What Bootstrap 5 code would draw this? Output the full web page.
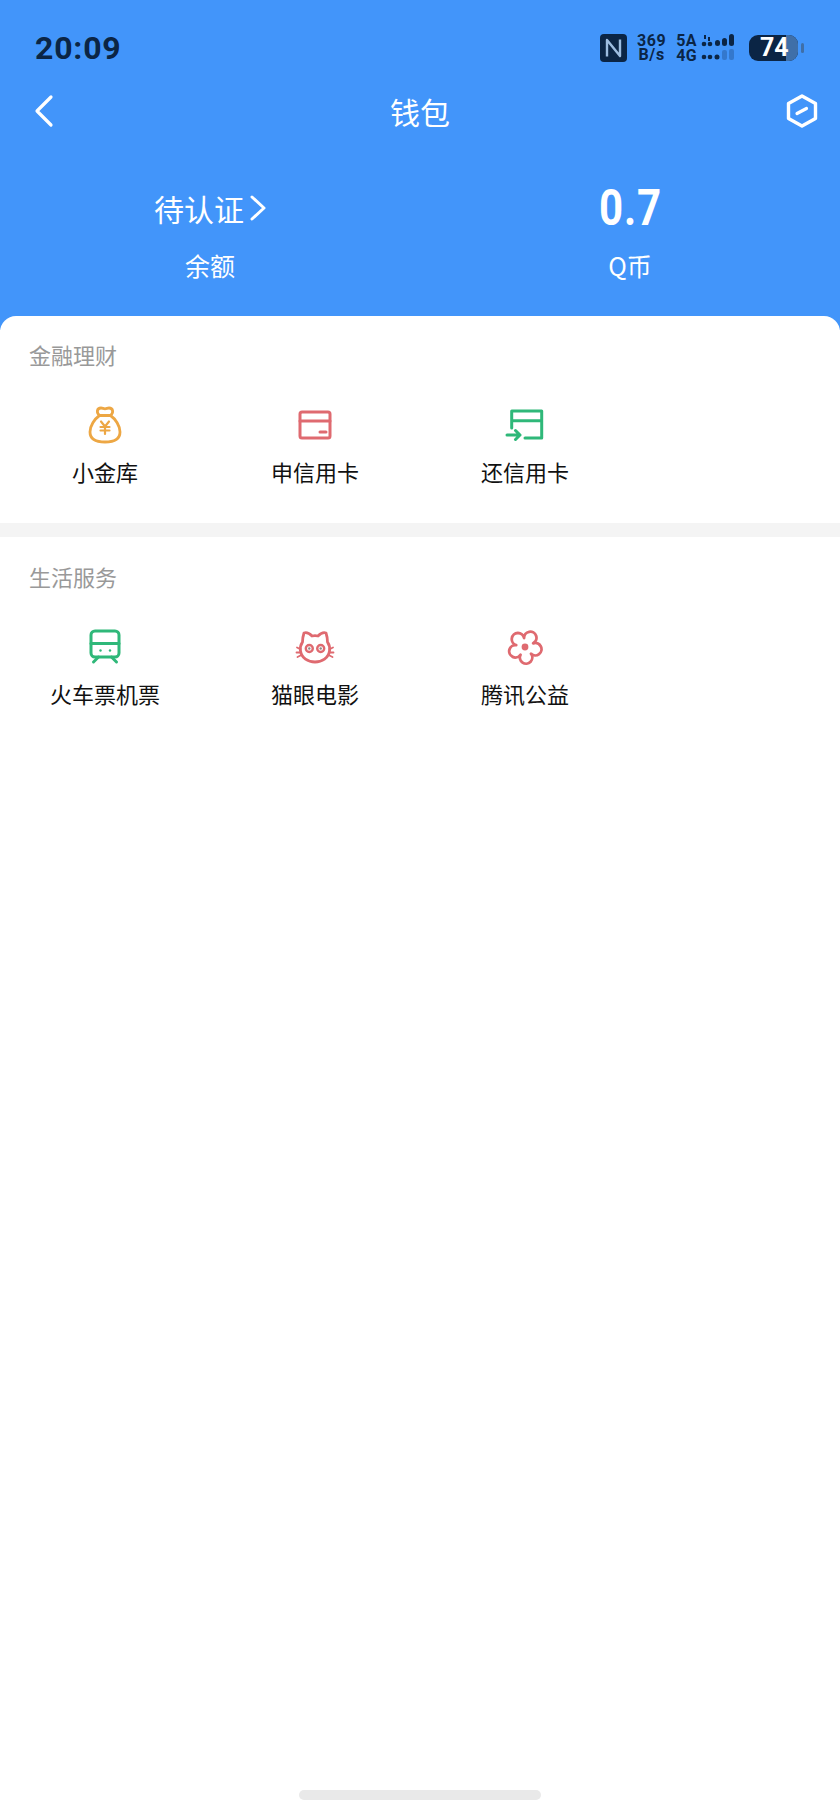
<!DOCTYPE html>
<html lang="zh-CN">
<head>
    <meta charset="UTF-8">
    <meta name="viewport" content="width=device-width, initial-scale=1.0">
    <title>钱包</title>
    <link href="https://cdn.jsdelivr.net/npm/bootstrap@5.3.0/dist/css/bootstrap.min.css" rel="stylesheet">
    <style>
        body {
            background: #fff;
            margin: 0;
            height: 1813px;
            overflow: hidden;
            font-family: "Noto Sans CJK SC", "Noto Sans", sans-serif;
        }
        .wallet-page { height: 1813px; }
        .wallet-head { background: #4295fa; height: 330px; padding-top: 30px; color: #fff; }
        .status-row { height: 36px; padding: 0 35px; color: #0b2545; }
        .status-time { font: 700 32px/36px Roboto, sans-serif; letter-spacing: .8px; }
        .status-icons { gap: 10px; margin-right: 1px; }
        .net-speed { font: 700 16px/14px Roboto, sans-serif; text-align: center; letter-spacing: .6px; }
        .sim-text { font: 700 16px/15px Roboto, sans-serif; letter-spacing: .3px; }
        .batt { width: 49px; height: 26px; border-radius: 9px; background: #0b2545; position: relative; color: #fff; font: 700 25px/26px Roboto, sans-serif; padding-left: 11px; }
        .batt-rest { position: absolute; right: 0; top: 0; bottom: 0; width: 12px; background: #3f6fa8; border-radius: 0 9px 9px 0; }
        .batt-num { position: relative; }
        .title-row { height: 60px; margin-top: 15px; padding: 0 22px; }
        .title-side { flex: 1; }
        .back-icon { margin-left: 11px; }
        .page-title { font-size: 30px; line-height: 60px; }
        .balance-row { margin-top: 35px; }
        .bal-cell { width: 420px; text-align: center; }
        .bal-top { height: 64px; font-size: 30px; line-height: 64px; gap: 6px; }
        .bal-num { font: 700 50px/64px Roboto, sans-serif; letter-spacing: 1px; display: inline-block; transform: scaleX(.84); }
        .bal-sub { font-size: 25px; line-height: 36px; margin-top: 7px; }
        .wallet-body { margin-top: -14px; background: #fff; border-radius: 16px 16px 0 0; position: relative; }
        .svc-block { padding: 22px 0 0; height: 207px; }
        .svc-block + .svc-block { border-top: 14px solid #f4f4f4; height: 221px; padding-top: 23px; }
        .svc-title { font-size: 22px; line-height: 32px; color: #999; padding-left: 29px; margin: 0; }
        .svc-grid { margin-top: 35px; }
        .svc-item { width: 210px; }
        .svc-icon { display: block; width: 40px; height: 40px; }
        .svc-label { font-size: 22px; line-height: 32px; color: #111; margin-top: 10px; }
        .home-bar { position: absolute; left: 299px; top: 1790px; width: 242px; height: 10px; border-radius: 5px; background: #e9e9e9; }
    </style>
</head>
<body>
    <div class="wallet-page position-relative">
        <div class="wallet-head">
            <div class="status-row d-flex justify-content-between align-items-center">
                <div class="status-time">20:09</div>
                <div class="status-icons d-flex align-items-center">
                    <svg width="27" height="28" viewBox="0 0 27 28">
                        <rect width="27" height="28" rx="4" fill="#0b2545"/>
                        <path d="M7 22.500V6l13 16V5.500" fill="none" stroke="#9dbde0" stroke-width="2.400" stroke-linejoin="round"/>
                    </svg>
                    <div class="net-speed">369<br>B/s</div>
                    <div class="d-flex align-items-center gap-1">
                        <div class="sim-text">5A<br>4G</div>
                        <svg width="38" height="28" viewBox="0 0 38 28" fill="#0b2545">
                            <path d="M3 1h2v4H3zM7 3h2v4H7z"/>
                            <circle cx="3" cy="10" r="2.300"/><circle cx="9" cy="10" r="2.300"/><rect x="14" y="6" width="5" height="6" rx="2.500"/><rect x="21" y="4" width="5" height="8" rx="2.500"/><rect x="28" y="0" width="5" height="12" rx="2.500"/>
                            <circle cx="3" cy="23" r="2.300"/><circle cx="9" cy="23" r="2.300"/><circle cx="16" cy="23" r="2.500"/>
                            <rect x="21" y="16" width="5" height="10" rx="2" opacity=".25"/><rect x="28" y="15" width="5" height="11" rx="2" opacity=".25"/>
                        </svg>
                    </div>
                    <div class="d-flex align-items-center" style="gap:3px">
                        <div class="batt"><div class="batt-rest"></div><span class="batt-num">74</span></div>
                        <svg width="3" height="10" viewBox="0 0 3 10"><rect width="3" height="10" rx="1.500" fill="#3f6fa8"/></svg>
                    </div>
                </div>
            </div>
            <div class="title-row d-flex align-items-center">
                <div class="title-side d-flex">
                    <svg class="back-icon" width="22" height="34" viewBox="0 0 22 34"><path d="M18 3 4 17l14 14" fill="none" stroke="#fff" stroke-width="3.200" stroke-linecap="round" stroke-linejoin="round"/></svg>
                </div>
                <div class="page-title">钱包</div>
                <div class="title-side d-flex justify-content-end">
                    <svg width="32" height="36" viewBox="0 0 32 36"><path d="M16 3 29.500 10.500v15L16 33 2.500 25.500v-15z" fill="none" stroke="#fff" stroke-width="3.400" stroke-linejoin="round"/><path d="M11 20.500 20.500 15.500" stroke="#fff" stroke-width="3.200" stroke-linecap="round"/></svg>
                </div>
            </div>
            <div class="balance-row d-flex">
                <div class="bal-cell">
                    <div class="bal-top d-flex justify-content-center align-items-center">
                        <span>待认证</span>
                        <svg width="16" height="26" viewBox="0 0 16 26"><path d="M2 2l12 11L2 24" fill="none" stroke="#fff" stroke-width="3" stroke-linecap="round" stroke-linejoin="round"/></svg>
                    </div>
                    <div class="bal-sub">余额</div>
                </div>
                <div class="bal-cell">
                    <div class="bal-top"><span class="bal-num">0.7</span></div>
                    <div class="bal-sub">Q币</div>
                </div>
            </div>
        </div>

        <div class="wallet-body">
            <section class="svc-block">
                <h6 class="svc-title fw-normal">金融理财</h6>
                <div class="svc-grid d-flex">
                    <div class="svc-item d-flex flex-column align-items-center">
                        <svg class="svc-icon" viewBox="0 0 40 40" fill="none" stroke="#eda744" stroke-width="2.800" stroke-linecap="round" stroke-linejoin="round">
                            <path d="M14.500 10.500C11 7.500 12 3 16 3c1.500 0 2.500.8 4 .8s2.500-.8 4-.8c4 0 5 4.500 1.500 7.500"/>
                            <path d="M14.500 10.500h11C30.500 14 35 21 35 27c0 7-6 10-15 10S5 34 5 27c0-6 4.500-13 9.500-16.500z"/>
                            <path d="M16 16.500l4 5 4-5M15.500 22h9M15.500 25.500h9M20 21.500v7.500" stroke-width="2.200"/>
                        </svg>
                        <div class="svc-label">小金库</div>
                    </div>
                    <div class="svc-item d-flex flex-column align-items-center">
                        <svg class="svc-icon" viewBox="0 0 40 40" fill="none" stroke="#df6a70" stroke-width="3" stroke-linecap="round" stroke-linejoin="round">
                            <rect x="5" y="7" width="30" height="26" rx="2"/>
                            <path d="M5 16h30M25 27h6"/>
                        </svg>
                        <div class="svc-label">申信用卡</div>
                    </div>
                    <div class="svc-item d-flex flex-column align-items-center">
                        <svg class="svc-icon" viewBox="0 0 40 40" fill="none" stroke="#2fb879" stroke-width="3" stroke-linecap="round" stroke-linejoin="round">
                            <path d="M6.700 23V6h30v27H20M6.700 15.700h30"/>
                            <path d="M2 30h13M10.500 25.500 15 30l-4.500 4.500"/>
                        </svg>
                        <div class="svc-label">还信用卡</div>
                    </div>
                </div>
            </section>
            <section class="svc-block">
                <h6 class="svc-title fw-normal">生活服务</h6>
                <div class="svc-grid d-flex">
                    <div class="svc-item d-flex flex-column align-items-center">
                        <svg class="svc-icon" viewBox="0 0 40 40" fill="none" stroke="#2fb879" stroke-width="3" stroke-linecap="round" stroke-linejoin="round">
                            <rect x="6" y="4" width="28" height="26" rx="4"/>
                            <path d="M6 16.500h28M13.500 30l-5 5M26.500 30l5 5"/>
                            <circle cx="15.500" cy="23.500" r="1.200" fill="#2fb879" stroke="none"/><circle cx="25" cy="23.500" r="1.200" fill="#2fb879" stroke="none"/>
                        </svg>
                        <div class="svc-label">火车票机票</div>
                    </div>
                    <div class="svc-item d-flex flex-column align-items-center">
                        <svg class="svc-icon" viewBox="0 0 40 40" fill="none" stroke="#df6a70" stroke-width="2.800" stroke-linecap="round" stroke-linejoin="round">
                            <path d="M9 6c3-1 6 1 8 3 2-.5 4-.5 6 0 2-2 5-4 8-3 1 3 1.500 6 1.500 9 2 3 2.500 6 2 9C33.500 31 27 35 20 35S6.500 31 5.500 24c-.5-3 0-6 2-9 0-3 .5-6 1.500-9z"/>
                            <path d="M5 22l-3-1.500M4.500 25.500H1.500M5.500 28.500l-3 1.500M35 22l3-1.500M35.500 25.500h3M34.500 28.500l3 1.500" stroke-width="1.800"/>
                            <circle cx="14.300" cy="21.500" r="3.500" stroke-width="2.400"/><circle cx="25.700" cy="21.500" r="3.500" stroke-width="2.400"/>
                            <circle cx="14.300" cy="21.500" r="1.200" fill="#8a8a8a" stroke="none"/><circle cx="25.700" cy="21.500" r="1.200" fill="#8a8a8a" stroke="none"/>
                        </svg>
                        <div class="svc-label">猫眼电影</div>
                    </div>
                    <div class="svc-item d-flex flex-column align-items-center">
                        <svg class="svc-icon" viewBox="0 0 40 40" fill="none" stroke="#df6a70" stroke-width="2.800" stroke-linecap="round" stroke-linejoin="round">
                            <path d="M19.060 11.050A6.200 6.200 0 1 1 28.220 16.340 6.200 6.200 0 1 1 26.020 26.690 6.200 6.200 0 1 1 15.500 27.790 6.200 6.200 0 1 1 11.200 18.130 6.200 6.200 0 1 1 19.060 11.050z"/>
                            <circle cx="20" cy="20" r="3.400" fill="#df6a70" stroke="none"/>
                        </svg>
                        <div class="svc-label">腾讯公益</div>
                    </div>
                </div>
            </section>
        </div>
        <div class="home-bar"></div>
    </div>
    <script src="https://cdn.jsdelivr.net/npm/bootstrap@5.3.0/dist/js/bootstrap.bundle.min.js"></script>
</body>
</html>
